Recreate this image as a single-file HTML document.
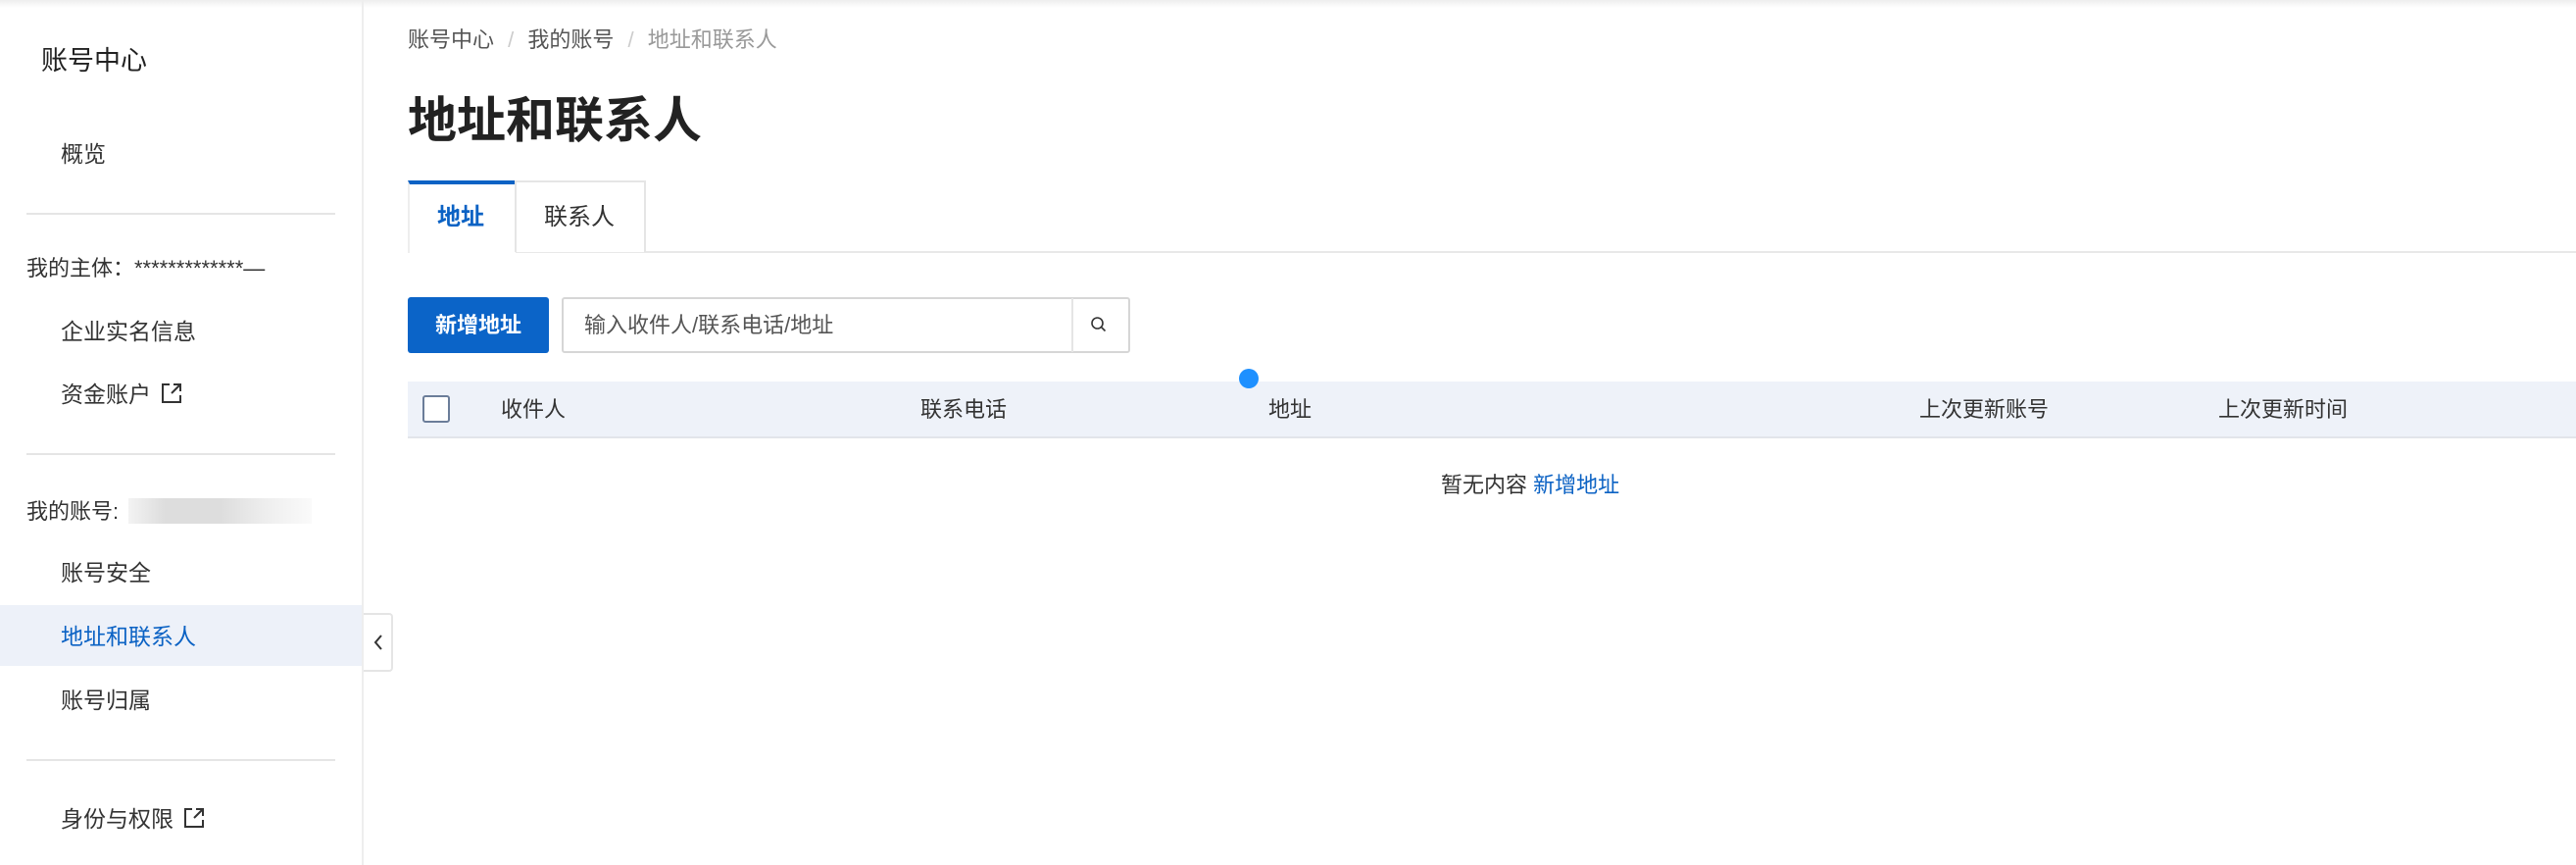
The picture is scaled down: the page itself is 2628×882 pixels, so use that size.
<!DOCTYPE html>
<html><head><meta charset="utf-8"><style>
*{margin:0;padding:0;box-sizing:border-box}
body{width:2628px;height:882px;background:#fff;font-family:"Liberation Sans","Noto Sans CJK SC",sans-serif;color:#333;position:relative;overflow:hidden}
.a{position:absolute;white-space:nowrap;line-height:1}
.side{position:absolute;left:0;top:0;width:371px;height:882px;border-right:2px solid #eee}
.hr{position:absolute;left:27px;width:315px;height:2px;background:#e5e5e5}
.item{font-size:23px;color:#333}
.ext{display:inline-block;vertical-align:-2px;margin-left:10px}
</style></head><body>
<div style="position:absolute;left:0;top:0;width:2628px;height:8px;background:linear-gradient(#eee,#fff)"></div>
<div class="side">
<div class="a" style="left:42px;top:49px;font-size:27px;color:#222">账号中心</div>
<div class="a item" style="left:62px;top:146px">概览</div>
<div class="hr" style="top:217px"></div>
<div class="a item" style="left:27px;top:263px;font-size:22px">我的主体：*************—</div>
<div class="a item" style="left:62px;top:327px">企业实名信息</div>
<div class="a item" style="left:62px;top:390px">资金账户<svg class="ext" width="22" height="22" viewBox="0 0 22 22" fill="none" stroke="#333" stroke-width="2"><path d="M9 2H2v18h18v-7M13 2h7v7M20 2l-9 9"/></svg></div>
<div class="hr" style="top:462px"></div>
<div class="a item" style="left:27px;top:511px;font-size:22px">我的账号:</div>
<div style="position:absolute;left:131px;top:508px;width:187px;height:26px;background:linear-gradient(90deg,#f3f3f3,#ddd 20%,#ddd 50%,#eee 75%,#fafafa)"></div>
<div class="a item" style="left:62px;top:573px">账号安全</div>
<div style="position:absolute;left:0;top:617px;width:369px;height:62px;background:#edf1f9"></div>
<div class="a item" style="left:62px;top:638px;color:#0b62c4">地址和联系人</div>
<div class="a item" style="left:62px;top:703px">账号归属</div>
<div class="hr" style="top:774px"></div>
<div class="a item" style="left:62px;top:823px">身份与权限<svg class="ext" width="22" height="22" viewBox="0 0 22 22" fill="none" stroke="#333" stroke-width="2"><path d="M9 2H2v18h18v-7M13 2h7v7M20 2l-9 9"/></svg></div>
</div>
<div style="position:absolute;left:371px;top:625px;width:30px;height:60px;border:2px solid #e5e5e5;border-left:none;border-radius:0 4px 4px 0;background:#fff"></div>
<svg style="position:absolute;left:380px;top:646px" width="12" height="18" viewBox="0 0 12 18" fill="none" stroke="#333" stroke-width="2"><path d="M9 2L3 9l6 7"/></svg>

<div class="a" style="left:416px;top:30px;font-size:22px;color:#555">账号中心 <span style="color:#ccc;margin:0 8px">/</span> 我的账号 <span style="color:#ccc;margin:0 8px">/</span> <span style="color:#999">地址和联系人</span></div>
<div class="a" style="left:416px;top:98px;font-size:50px;font-weight:bold;color:#222">地址和联系人</div>

<div style="position:absolute;left:416px;top:256px;width:2212px;height:2px;background:#e8e8e8"></div>
<div style="position:absolute;left:416px;top:184px;width:110px;height:74px;background:#fff;border-top:4px solid #0b62c4;border-left:2px solid #eee"></div>
<div class="a" style="left:446px;top:210px;font-size:24px;font-weight:bold;color:#0b62c4">地址</div>
<div style="position:absolute;left:525px;top:184px;width:134px;height:73px;border:2px solid #e5e5e5;border-bottom:none;background:#fff"></div>
<div class="a" style="left:555px;top:210px;font-size:24px;color:#333">联系人</div>

<div style="position:absolute;left:416px;top:303px;width:144px;height:57px;background:#0b64c8;border-radius:3px"></div>
<div class="a" style="left:444px;top:321px;font-size:22px;font-weight:bold;color:#fff">新增地址</div>
<div style="position:absolute;left:573px;top:303px;width:580px;height:57px;border:2px solid #d6d6d6;border-radius:3px"></div>
<div style="position:absolute;left:1093px;top:304px;width:2px;height:55px;background:#e5e5e5"></div>
<div class="a" style="left:596px;top:321px;font-size:22px;color:#555">输入收件人/联系电话/地址</div>
<svg style="position:absolute;left:1112px;top:322px" width="18" height="18" viewBox="0 0 18 18" fill="none" stroke="#333" stroke-width="1.6"><circle cx="7.5" cy="7.5" r="5.5"/><path d="M11.5 11.5l4 4"/></svg>

<div style="position:absolute;left:416px;top:389px;width:2212px;height:58px;background:#eef2f9;border-bottom:2px solid #e2e5ea"></div>
<div style="position:absolute;left:431px;top:403px;width:28px;height:28px;border:2px solid #6b7d99;border-radius:3px;background:#fff"></div>
<div class="a" style="left:511px;top:407px;font-size:22px">收件人</div>
<div class="a" style="left:939px;top:407px;font-size:22px">联系电话</div>
<div class="a" style="left:1294px;top:407px;font-size:22px">地址</div>
<div class="a" style="left:1958px;top:407px;font-size:22px">上次更新账号</div>
<div class="a" style="left:2263px;top:407px;font-size:22px">上次更新时间</div>
<div style="position:absolute;left:1264px;top:376px;width:20px;height:20px;border-radius:50%;background:#1e90ff"></div>

<div class="a" style="left:1470px;top:484px;font-size:22px;color:#333">暂无内容 <span style="color:#0b62c4">新增地址</span></div>
</body></html>
